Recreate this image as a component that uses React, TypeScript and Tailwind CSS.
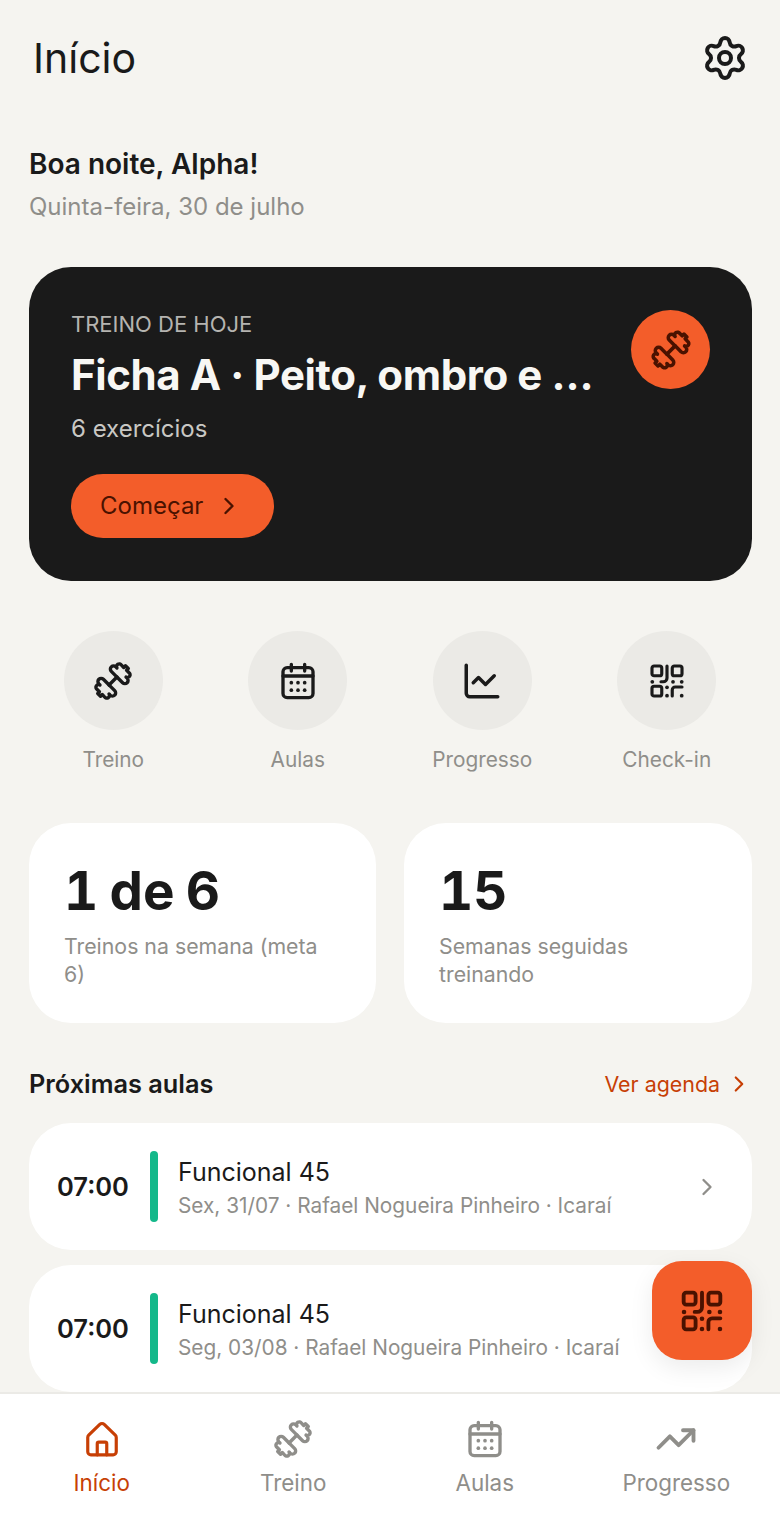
import React from 'react';
import { Settings, ChevronRight, ChartLine, TrendingUp } from 'lucide-react';

function DumbbellIcon({ className = '' }: { className?: string }) {
  const end = 'M2.8 -1V-4a1.6 1.6 0 0 1 3.2 0V-3.2a1.3 1.3 0 0 1 2.6 .6V-1h1.2v2H8.6V2.6a1.3 1.3 0 0 1-2.6 .6V4a1.6 1.6 0 0 1-3.2 0V1z';
  return (
    <svg viewBox="0 0 24 24" fill="none" stroke="currentColor" strokeWidth={1.7} strokeLinecap="round" strokeLinejoin="round" className={className}>
      <g transform="translate(12 12) rotate(-45)">
        <path d="M-2.8 0H2.8" />
        <path d={end} />
        <path d={end} transform="scale(-1 1)" />
      </g>
    </svg>
  );
}

function CalendarIcon({ className = '' }: { className?: string }) {
  return (
    <svg viewBox="0 0 24 24" fill="none" stroke="currentColor" strokeWidth={2} strokeLinecap="round" strokeLinejoin="round" className={className}>
      <rect x="3" y="4" width="18" height="18" rx="2.5" />
      <path d="M8 2v4M16 2v4M3 9h18" />
      <g fill="currentColor" stroke="none">
        <circle cx="8" cy="13" r="1.1" />
        <circle cx="12" cy="13" r="1.1" />
        <circle cx="16" cy="13" r="1.1" />
        <circle cx="8" cy="17.5" r="1.1" />
        <circle cx="12" cy="17.5" r="1.1" />
        <circle cx="16" cy="17.5" r="1.1" />
      </g>
    </svg>
  );
}

function QrIcon({ className = '' }: { className?: string }) {
  return (
    <svg viewBox="0 0 24 24" fill="none" stroke="currentColor" strokeWidth={2.1} strokeLinecap="round" strokeLinejoin="round" className={className}>
      <rect x="2" y="2" width="6.5" height="6.5" rx="1.4" />
      <rect x="15.5" y="2" width="6.5" height="6.5" rx="1.4" />
      <rect x="2" y="15.5" width="6.5" height="6.5" rx="1.4" />
      <path d="M12 2v8a2.5 2.5 0 0 1-2.5 2.5H8" />
      <path d="M15.5 22v-4a2 2 0 0 1 2-2H22" />
      <g fill="currentColor" stroke="none">
        <circle cx="2.2" cy="12.5" r="1.25" />
        <circle cx="16" cy="12.5" r="1.25" />
        <circle cx="21.8" cy="12.5" r="1.25" />
        <circle cx="12" cy="16.2" r="1.25" />
        <circle cx="12" cy="21.8" r="1.25" />
        <circle cx="21.8" cy="21.8" r="1.25" />
      </g>
    </svg>
  );
}

function HomeIcon({ className = '' }: { className?: string }) {
  return (
    <svg viewBox="0 0 24 24" fill="none" stroke="currentColor" strokeWidth={2} strokeLinecap="round" strokeLinejoin="round" className={className}>
      <path d="M3 11a2 2 0 0 1 .6-1.4l7-6.8a2 2 0 0 1 2.8 0l7 6.8a2 2 0 0 1 .6 1.4v9a2 2 0 0 1-2 2H5a2 2 0 0 1-2-2z" />
      <path d="M9 22v-7a1 1 0 0 1 1-1h4a1 1 0 0 1 1 1v7" />
    </svg>
  );
}

const ACTIONS = [
  { label: 'Treino', icon: <DumbbellIcon className="size-[48px]" /> },
  { label: 'Aulas', icon: <CalendarIcon className="size-[40px]" /> },
  { label: 'Progresso', icon: <ChartLine className="size-[42px]" strokeWidth={2} /> },
  { label: 'Check-in', icon: <QrIcon className="size-[36px]" /> },
];

const CLASSES = [
  { time: '07:00', name: 'Funcional 45', info: 'Sex, 31/07 · Rafael Nogueira Pinheiro · Icaraí' },
  { time: '07:00', name: 'Funcional 45', info: 'Seg, 03/08 · Rafael Nogueira Pinheiro · Icaraí' },
];

const STATS = [
  { value: '1 de 6', label: 'Treinos na semana (meta 6)' },
  { value: '15', label: 'Semanas seguidas treinando' },
];

const NAV = [
  { label: 'Início', icon: <HomeIcon className="size-[38px]" />, active: true },
  { label: 'Treino', icon: <DumbbellIcon className="size-[48px]" /> },
  { label: 'Aulas', icon: <CalendarIcon className="size-[40px]" /> },
  { label: 'Progresso', icon: <TrendingUp className="size-[42px]" strokeWidth={2.2} /> },
];

export default function App() {
  return (
    <div className="relative flex h-[1523px] w-[780px] flex-col overflow-hidden bg-[#f5f4f0] font-['Inter',sans-serif] text-[#1a1a1a]">
      <main className="min-h-0 flex-1 overflow-hidden">
        {/* Header */}
        <div className="flex items-center justify-between pl-[33px] pr-[31px] pt-[32px]">
          <h1 className="text-[41px] leading-[52px] font-normal">Início</h1>
          <Settings className="size-[48px]" strokeWidth={2} />
        </div>

        {/* Greeting */}
        <div className="px-[29px] pt-[62px]">
          <p className="text-[28px] leading-[36px] font-semibold">Boa noite, Alpha!</p>
          <p className="mt-[9px] text-[24px] leading-[32px] text-[#8f8e8a]">Quinta-feira, 30 de julho</p>
        </div>

        {/* Today's workout */}
        <section className="ml-[29px] mr-[28px] mt-[44px] flex h-[314px] items-start justify-between rounded-[42px] bg-[#1a1a1a] pl-[42px] pr-[42px] pt-[43px]">
          <div className="min-w-0 flex-1">
            <p className="text-[22px] leading-[28px] text-[#b5b4b0]">TREINO DE HOJE</p>
            <p className="mt-[9px] text-[42px] leading-[56px] font-bold tracking-[-0.4px] text-[#f8f7f4]">Ficha A · Peito, ombro e …</p>
            <p className="mt-[10px] text-[24px] leading-[32px] text-[#c9c8c4]">6 exercícios</p>
            <button className="mt-[29px] flex h-[64px] w-[203px] items-center gap-[12px] rounded-full bg-[#f35d2a] pl-[29px] text-[24px] text-[#4a1200]">
              Começar
              <ChevronRight className="size-[28px]" strokeWidth={2} />
            </button>
          </div>
          <div className="flex size-[79px] shrink-0 items-center justify-center rounded-full bg-[#f35d2a] text-[#4a1200]">
            <DumbbellIcon className="size-[50px]" />
          </div>
        </section>

        {/* Shortcuts */}
        <div className="mt-[50px] grid grid-cols-4 px-[21px]">
          {ACTIONS.map(a => (
            <div key={a.label} className="flex flex-col items-center">
              <div className="flex size-[99px] items-center justify-center rounded-full bg-[#ebeae6]">{a.icon}</div>
              <span className="mt-[16px] text-[20.8px] leading-[28px] text-[#8f8e8a]">{a.label}</span>
            </div>
          ))}
        </div>

        {/* Stats */}
        <div className="ml-[29px] mr-[28px] mt-[49px] grid grid-cols-[347px_348px] gap-[28px]">
          {STATS.map(s => (
            <div key={s.value} className="h-[200px] rounded-[42px] bg-white pl-[35px] pr-[36px] pt-[33px]">
              <p className="text-[53px] leading-[70px] font-bold tabular-nums [word-spacing:-3px]">{s.value}</p>
              <p className="mt-[6px] text-[21.3px] leading-[28px] text-[#8f8e8a]">{s.label}</p>
            </div>
          ))}
        </div>

        {/* Upcoming classes */}
        <div className="ml-[29px] mr-[28px] mt-[45px] flex items-center justify-between">
          <h2 className="text-[25.3px] leading-[32px] font-semibold">Próximas aulas</h2>
          <div className="flex items-center gap-[6px] text-[21.4px] text-[#c73f05]">
            Ver agenda
            <ChevronRight className="size-[26px]" strokeWidth={2} />
          </div>
        </div>
        <div className="ml-[29px] mr-[28px] mt-[23px] flex flex-col gap-[15px]">
          {CLASSES.map(c => (
            <div key={c.info} className="flex h-[127px] items-center rounded-[42px] bg-white pl-[28px] pr-[31px]">
              <span className="w-[93px] pt-[2px] text-[25.5px] font-semibold">{c.time}</span>
              <span className="h-[71px] w-[8px] rounded-full bg-[#14b88a]" />
              <div className="ml-[20px] min-w-0 flex-1 pt-[3px]">
                <p className="text-[25px] leading-[32px]">{c.name}</p>
                <p className="mt-[3px] whitespace-nowrap text-[20.8px] leading-[30px] text-[#8f8e8a]">{c.info}</p>
              </div>
              <ChevronRight className="size-[28px] text-[#8f8e8a]" strokeWidth={2} />
            </div>
          ))}
        </div>
      </main>

      {/* Check-in FAB */}
      <button className="absolute left-[652px] top-[1261px] flex h-[99px] w-[100px] items-center justify-center rounded-[30px] bg-[#f35d2a] text-[#4a1200] shadow-[0_8px_24px_rgba(0,0,0,0.08)]">
        <QrIcon className="size-[44px]" />
      </button>

      {/* Bottom nav */}
      <nav className="grid h-[131px] shrink-0 grid-cols-4 border-t-2 border-[#ebeae6] bg-white pl-[6px] pr-[8px] pt-[24px]">
        {NAV.map(n => (
          <div key={n.label} className={`flex flex-col items-center ${n.active ? 'text-[#c73f05]' : 'text-[#8f8e8a]'}`}>
            <div className="flex h-[42px] items-center justify-center">{n.icon}</div>
            <span className="mt-[8px] text-[22.4px] leading-[30px]">{n.label}</span>
          </div>
        ))}
      </nav>
    </div>
  );
}
